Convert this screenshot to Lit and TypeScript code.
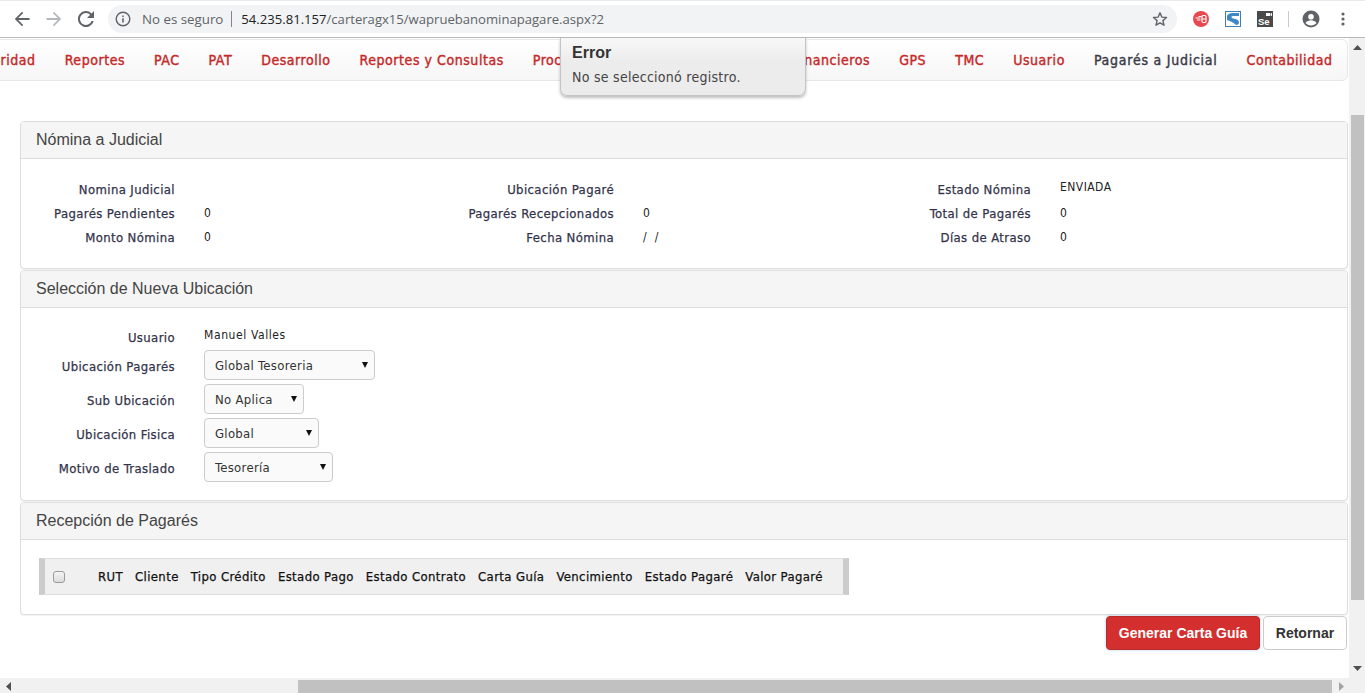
import { html, css, LitElement } from 'lit';
import { customElement } from 'lit/decorators.js';

const NAV_ITEMS = [
  'Seguridad',
  'Reportes',
  'PAC',
  'PAT',
  'Desarrollo',
  'Reportes y Consultas',
  'Procesos',
  'Cobranzas',
  'Productos Financieros',
  'GPS',
  'TMC',
  'Usuario',
  'Pagarés a Judicial',
  'Contabilidad',
];

const SUMMARY = [
  ['Nomina Judicial', '', 'Ubicación Pagaré', '', 'Estado Nómina', 'ENVIADA'],
  ['Pagarés Pendientes', '0', 'Pagarés Recepcionados', '0', 'Total de Pagarés', '0'],
  ['Monto Nómina', '0', 'Fecha Nómina', '/\u00a0\u00a0/', 'Días de Atraso', '0'],
];

const LOCATION_SELECTS = [
  { label: 'Ubicación Pagarés', value: 'Global Tesoreria', width: 171 },
  { label: 'Sub Ubicación', value: 'No Aplica', width: 100 },
  { label: 'Ubicación Fisica', value: 'Global', width: 115 },
  { label: 'Motivo de Traslado', value: 'Tesorería', width: 129 },
];

const COLUMNS = [
  'RUT',
  'Cliente',
  'Tipo Crédito',
  'Estado Pago',
  'Estado Contrato',
  'Carta Guía',
  'Vencimiento',
  'Estado Pagaré',
  'Valor Pagaré',
];

@customElement('app-root')
export class AppRoot extends LitElement {
  static styles = css`
    :host {
      display: block;
      width: 1365px;
      height: 693px;
      overflow: hidden;
      background: #fff;
      font-family: 'DejaVu Sans', sans-serif;
      font-stretch: condensed;
      font-size: 13px;
      color: #333;
    }

    /* browser toolbar */
    .toolbar {
      box-sizing: border-box;
      border-top: 1px solid #e8eaed;
      border-bottom: 1px solid #b8b8b8;
      height: 38px;
      display: flex;
      align-items: center;
      background: #fff;
    }
    .tool {
      width: 32px;
      height: 32px;
      display: flex;
      align-items: center;
      justify-content: center;
      flex: none;
    }
    .tools {
      display: flex;
      padding-left: 6px;
      margin-right: 6px;
    }
    .omnibox {
      width: 1069px;
      height: 28px;
      border-radius: 14px;
      background: #f1f3f4;
      display: flex;
      align-items: center;
      box-sizing: border-box;
      padding: 0 9px 0 7px;
      font-family: 'Open Sans', sans-serif;
      font-stretch: normal;
      font-size: 13.3px;
      color: #5f6368;
      flex: none;
    }
    .omnibox .insecure {
      margin-left: 11px;
    }
    .omnibox .sep {
      width: 1px;
      height: 16px;
      background: #80868b;
      margin: 0 9px 0 8px;
    }
    .omnibox .url {
      font-size: 13.1px;
    }
    .omnibox .host {
      color: #202124;
    }
    .omnibox .star {
      margin-left: auto;
      display: flex;
    }
    .extensions {
      display: flex;
      align-items: center;
      margin-left: 8px;
    }
    .ext-sep {
      width: 1px;
      height: 16px;
      background: #c8cacc;
      margin: 0 6px 0 7px;
    }

    /* page viewport with its scrollbars */
    .viewport {
      display: grid;
      grid-template-columns: 1349px 16px;
      grid-template-rows: 640px 15px;
      height: 655px;
    }
    .page {
      position: relative;
      overflow: hidden;
    }

    nav {
      height: 42px;
      margin: 1px 1px 0 -20px;
      box-sizing: border-box;
      border: 1px solid #e7e7e7;
      border-radius: 6px;
      background: linear-gradient(#fff, #f6f6f6);
      display: flex;
      justify-content: flex-end;
      align-items: center;
      overflow: hidden;
    }
    nav a {
      padding: 0 14.5px;
      flex: none;
      font-size: 14px;
      letter-spacing: 0.55px;
      -webkit-text-stroke: 0.4px currentColor;
      color: #c62828;
      white-space: nowrap;
    }
    nav a.active {
      color: #3a3a46;
      letter-spacing: 0.75px;
    }

    .toast {
      position: absolute;
      left: 560px;
      top: 0;
      width: 246px;
      height: 58px;
      box-sizing: border-box;
      padding: 4px 11px;
      background: linear-gradient(#f8f8f8, #ececec 40%);
      border: 1px solid #c4c4c4;
      border-top: none;
      border-radius: 0 0 7px 7px;
      box-shadow: 0 2px 3px rgba(0, 0, 0, 0.25);
      color: #444;
    }
    .toast h4 {
      margin: 0;
      font-family: 'Liberation Sans', sans-serif;
      font-stretch: normal;
      font-size: 16px;
      line-height: 22px;
      font-weight: 700;
      color: #333;
    }
    .toast p {
      margin: 3px 0 0;
      font-size: 14px;
      line-height: 20px;
      letter-spacing: 0.27px;
    }

    .content {
      padding: 40px 1px 0 20px;
      display: flex;
      flex-direction: column;
      gap: 1px;
    }
    .panel {
      border: 1px solid #ddd;
      border-radius: 4px;
      background: #fff;
      box-shadow: 0 1px 1px rgba(0, 0, 0, 0.05);
    }
    .panel-heading {
      height: 37px;
      box-sizing: border-box;
      padding: 0 15px;
      display: flex;
      align-items: center;
      background: #f5f5f5;
      border-bottom: 1px solid #ddd;
      border-radius: 3px 3px 0 0;
      font-family: 'Liberation Sans', sans-serif;
      font-stretch: normal;
      font-size: 16px;
      color: #444;
    }

    .summary {
      height: 109px;
      box-sizing: border-box;
      padding-top: 18px;
      display: grid;
      grid-template-columns: 154px 260px 179px 259px 158px 1fr;
      grid-auto-rows: 24px;
      align-items: center;
    }
    .label {
      text-align: right;
      color: #33334a;
      letter-spacing: 0.38px;
      -webkit-text-stroke: 0.25px currentColor;
      white-space: nowrap;
    }
    .label.for-select {
      padding-top: 2px;
    }
    .value {
      padding-left: 29px;
      font-size: 12px;
      letter-spacing: 0.45px;
      color: #222;
    }
    .value.raised {
      transform: translateY(-2px);
    }
    .value.user {
      transform: translateY(-3px);
      letter-spacing: 0.6px;
    }

    .location {
      height: 192px;
      box-sizing: border-box;
      padding-top: 19px;
      display: grid;
      grid-template-columns: 154px 1fr;
      grid-template-rows: 21px repeat(4, 34px);
      align-items: center;
    }
    .select {
      margin-left: 29px;
      position: relative;
      height: 30px;
    }
    .select select {
      appearance: none;
      width: 100%;
      height: 30px;
      box-sizing: border-box;
      padding: 0 10px;
      border: 1px solid #ccc;
      border-radius: 4px;
      background: #fafafa;
      font: inherit;
      font-size: 13px;
      letter-spacing: 0.3px;
      color: #333;
    }
    .select svg {
      position: absolute;
      right: 7px;
      top: 12px;
    }

    .grid-wrap {
      height: 74px;
      box-sizing: border-box;
      padding: 18px 0 0 18px;
    }
    .grid-head {
      width: 810px;
      height: 37px;
      box-sizing: border-box;
      display: flex;
      align-items: center;
      background: #f0f0f0;
      border: solid #ccc;
      border-width: 1px 6px;
      border-color: #ddd #ccc;
      color: #111;
      letter-spacing: 0.38px;
      -webkit-text-stroke: 0.25px currentColor;
    }
    .grid-head input {
      appearance: none;
      width: 12px;
      height: 12px;
      margin: 0 33px 0 8px;
      box-sizing: border-box;
      border: 1px solid #9a9a9a;
      border-radius: 3px;
      background: linear-gradient(#f4f4f4, #dcdcdc);
    }
    .grid-head span {
      margin-right: 12px;
      white-space: nowrap;
    }

    .actions {
      display: flex;
      justify-content: flex-end;
      gap: 3px;
      padding: 1px 2px 0 0;
    }
    button {
      height: 34px;
      box-sizing: border-box;
      border-radius: 4px;
      font-family: 'Liberation Sans', sans-serif;
      font-stretch: normal;
      font-size: 14px;
      font-weight: 700;
    }
    .primary {
      width: 154px;
      background: #d32f2f;
      border: 1px solid #b92a2a;
      color: #fff;
      box-shadow: 0 0 3px rgba(90, 140, 220, 0.45);
    }
    .secondary {
      width: 84px;
      background: #fff;
      border: 1px solid #ccc;
      color: #333;
    }

    /* scrollbars */
    .vbar {
      background: #f1f1f1;
      display: flex;
      flex-direction: column;
      align-items: center;
    }
    .vbar .up {
      margin-top: 7px;
    }
    .vbar .thumb {
      width: 13px;
      height: 485px;
      margin: 65px 0 0 1px;
      background: #c1c1c1;
    }
    .vbar .down {
      margin-top: 66px;
    }
    .hbar {
      background: #f1f1f1;
      display: flex;
      align-items: flex-end;
    }
    .hbar .left {
      margin: 0 0 2px 6px;
    }
    .hbar .thumb {
      width: 1034px;
      height: 13px;
      margin-left: 287px;
      background: #c1c1c1;
    }
    .hbar .right {
      margin: 0 0 2px 7px;
    }
    .corner {
      background: #f1f1f1;
    }
  `;

  private renderToolbar() {
    return html`
      <header class="toolbar">
        <div class="tools">
          <div class="tool">
            <svg width="16" height="16" viewBox="0 0 16 16"><path d="M15.500 7H4.200l5-5L8 .8.800 8 8 15.200l1.200-1.200-5-5h11.300z" fill="#5f6368"/></svg>
          </div>
          <div class="tool">
            <svg width="16" height="16" viewBox="0 0 16 16"><path d="M.5 7h11.300l-5-5L8 .8 15.200 8 8 15.200 6.800 14l5-5H.5z" fill="#b5b8bb"/></svg>
          </div>
          <div class="tool">
            <svg width="16" height="16" viewBox="0 0 16 16"><path d="M13.600 2.400A8 8 0 1 0 15.700 10h-2.100a6 6 0 1 1-1.400-6.200L9 7h7V0z" fill="#5f6368"/></svg>
          </div>
        </div>
        <div class="omnibox">
          <svg width="16" height="16" viewBox="0 0 16 16">
            <circle cx="8" cy="8" r="6.800" fill="none" stroke="#5f6368" stroke-width="1.400"/>
            <path d="M7.200 7.200h1.600v4.400H7.200zM7.200 4.400h1.600V6H7.200z" fill="#5f6368"/>
          </svg>
          <span class="insecure">No es seguro</span>
          <span class="sep"></span>
          <span class="url"><span class="host">54.235.81.157</span>/carteragx15/wapruebanominapagare.aspx?2</span>
          <span class="star">
            <svg width="16" height="16" viewBox="0 0 16 16"><path d="M8 1.800l1.800 4.300 4.700.4-3.600 3.100 1.100 4.600L8 11.800l-4 2.400 1.100-4.600L1.500 6.500l4.700-.4z" fill="none" stroke="#5f6368" stroke-width="1.400" stroke-linejoin="round"/></svg>
          </span>
        </div>
        <div class="extensions">
          <div class="tool">
            <svg width="16" height="16" viewBox="0 0 16 16">
              <circle cx="8" cy="8" r="8" fill="#e8484f"/>
              <path d="M2.500 7h5M4 9h3.500M5.500 5.500h3" stroke="#fff" stroke-width="1"/>
              <rect x="9" y="4.500" width="4" height="7" rx="1.200" fill="none" stroke="#fff" stroke-width="1.200"/>
              <path d="M9.500 8h3" stroke="#fff"/>
            </svg>
          </div>
          <div class="tool">
            <svg width="16" height="16" viewBox="0 0 16 16">
              <rect x=".5" y=".5" width="15" height="15" fill="#fff" stroke="#3f7fb5"/>
              <path d="M2 6c0-3 3-4 6-4h6v3H8C6 5 6 7 8 7.500c4 .5 6 1.500 6 4 0 1.500-1 2.500-3 2.500-2-2-5-4-9-5z" fill="#3f88c5"/>
            </svg>
          </div>
          <div class="tool">
            <svg width="16" height="16" viewBox="0 0 16 16">
              <rect width="16" height="16" fill="#4a4a4a"/>
              <path d="M9 2h4v3H9zM13.500 2.500L15 2v3l-1.500-.5z" fill="#fff"/>
              <text x="1" y="14" font-family="Liberation Sans" font-size="9.500" font-weight="700" fill="#fff">Se</text>
            </svg>
          </div>
          <span class="ext-sep"></span>
          <div class="tool">
            <svg width="18" height="18" viewBox="0 0 18 18">
              <circle cx="9" cy="9" r="8.500" fill="#5f6368"/>
              <circle cx="9" cy="6.800" r="2.800" fill="#fff"/>
              <path d="M3.500 13c1-2 3.500-2.800 5.500-2.800s4.500.8 5.500 2.800c-1.300 1.500-3.300 2.400-5.500 2.400S4.800 14.500 3.500 13z" fill="#fff"/>
            </svg>
          </div>
          <div class="tool">
            <svg width="4" height="14" viewBox="0 0 4 14"><circle cx="2" cy="2" r="1.600" fill="#5f6368"/><circle cx="2" cy="7" r="1.600" fill="#5f6368"/><circle cx="2" cy="12" r="1.600" fill="#5f6368"/></svg>
          </div>
        </div>
      </header>
    `;
  }

  private renderSelect(value: string, width: number) {
    return html`
      <div class="select" style="width: ${width}px">
        <select><option>${value}</option></select>
        <svg width="6" height="6" viewBox="0 0 6 6"><path d="M0 0h6L3 6z" fill="#111"/></svg>
      </div>
    `;
  }

  render() {
    return html`
      ${this.renderToolbar()}
      <div class="viewport">
        <main class="page">
          <nav>
            ${NAV_ITEMS.map(
              (item) =>
                html`<a class=${item === 'Pagarés a Judicial' ? 'active' : ''}>${item}</a>`
            )}
          </nav>
          <div class="toast">
            <h4>Error</h4>
            <p>No se seleccionó registro.</p>
          </div>
          <div class="content">
            <section class="panel">
              <div class="panel-heading">Nómina a Judicial</div>
              <div class="summary">
                ${SUMMARY.map((row) =>
                  row.map((cell, i) =>
                    i % 2 === 0
                      ? html`<div class="label">${cell}</div>`
                      : html`<div class="value ${cell === 'ENVIADA' ? 'raised' : ''}">${cell}</div>`
                  )
                )}
              </div>
            </section>
            <section class="panel">
              <div class="panel-heading">Selección de Nueva Ubicación</div>
              <div class="location">
                <div class="label">Usuario</div>
                <div class="value user">Manuel Valles</div>
                ${LOCATION_SELECTS.map(
                  (s) => html`
                    <div class="label for-select">${s.label}</div>
                    ${this.renderSelect(s.value, s.width)}
                  `
                )}
              </div>
            </section>
            <section class="panel">
              <div class="panel-heading">Recepción de Pagarés</div>
              <div class="grid-wrap">
                <div class="grid-head">
                  <input type="checkbox" />
                  ${COLUMNS.map((c) => html`<span>${c}</span>`)}
                </div>
              </div>
            </section>
          </div>
          <div class="actions">
            <button class="primary">Generar Carta Guía</button>
            <button class="secondary">Retornar</button>
          </div>
        </main>
        <div class="vbar">
          <svg class="up" width="9" height="5" viewBox="0 0 9 5"><path d="M0 5h9L4.500 0z" fill="#505050"/></svg>
          <div class="thumb"></div>
          <svg class="down" width="9" height="5" viewBox="0 0 9 5"><path d="M0 0h9L4.500 5z" fill="#505050"/></svg>
        </div>
        <div class="hbar">
          <svg class="left" width="5" height="9" viewBox="0 0 5 9"><path d="M5 0v9L0 4.500z" fill="#505050"/></svg>
          <div class="thumb"></div>
          <svg class="right" width="5" height="9" viewBox="0 0 5 9"><path d="M0 0v9l5-4.500z" fill="#a3a3a3"/></svg>
        </div>
        <div class="corner"></div>
      </div>
    `;
  }
}
